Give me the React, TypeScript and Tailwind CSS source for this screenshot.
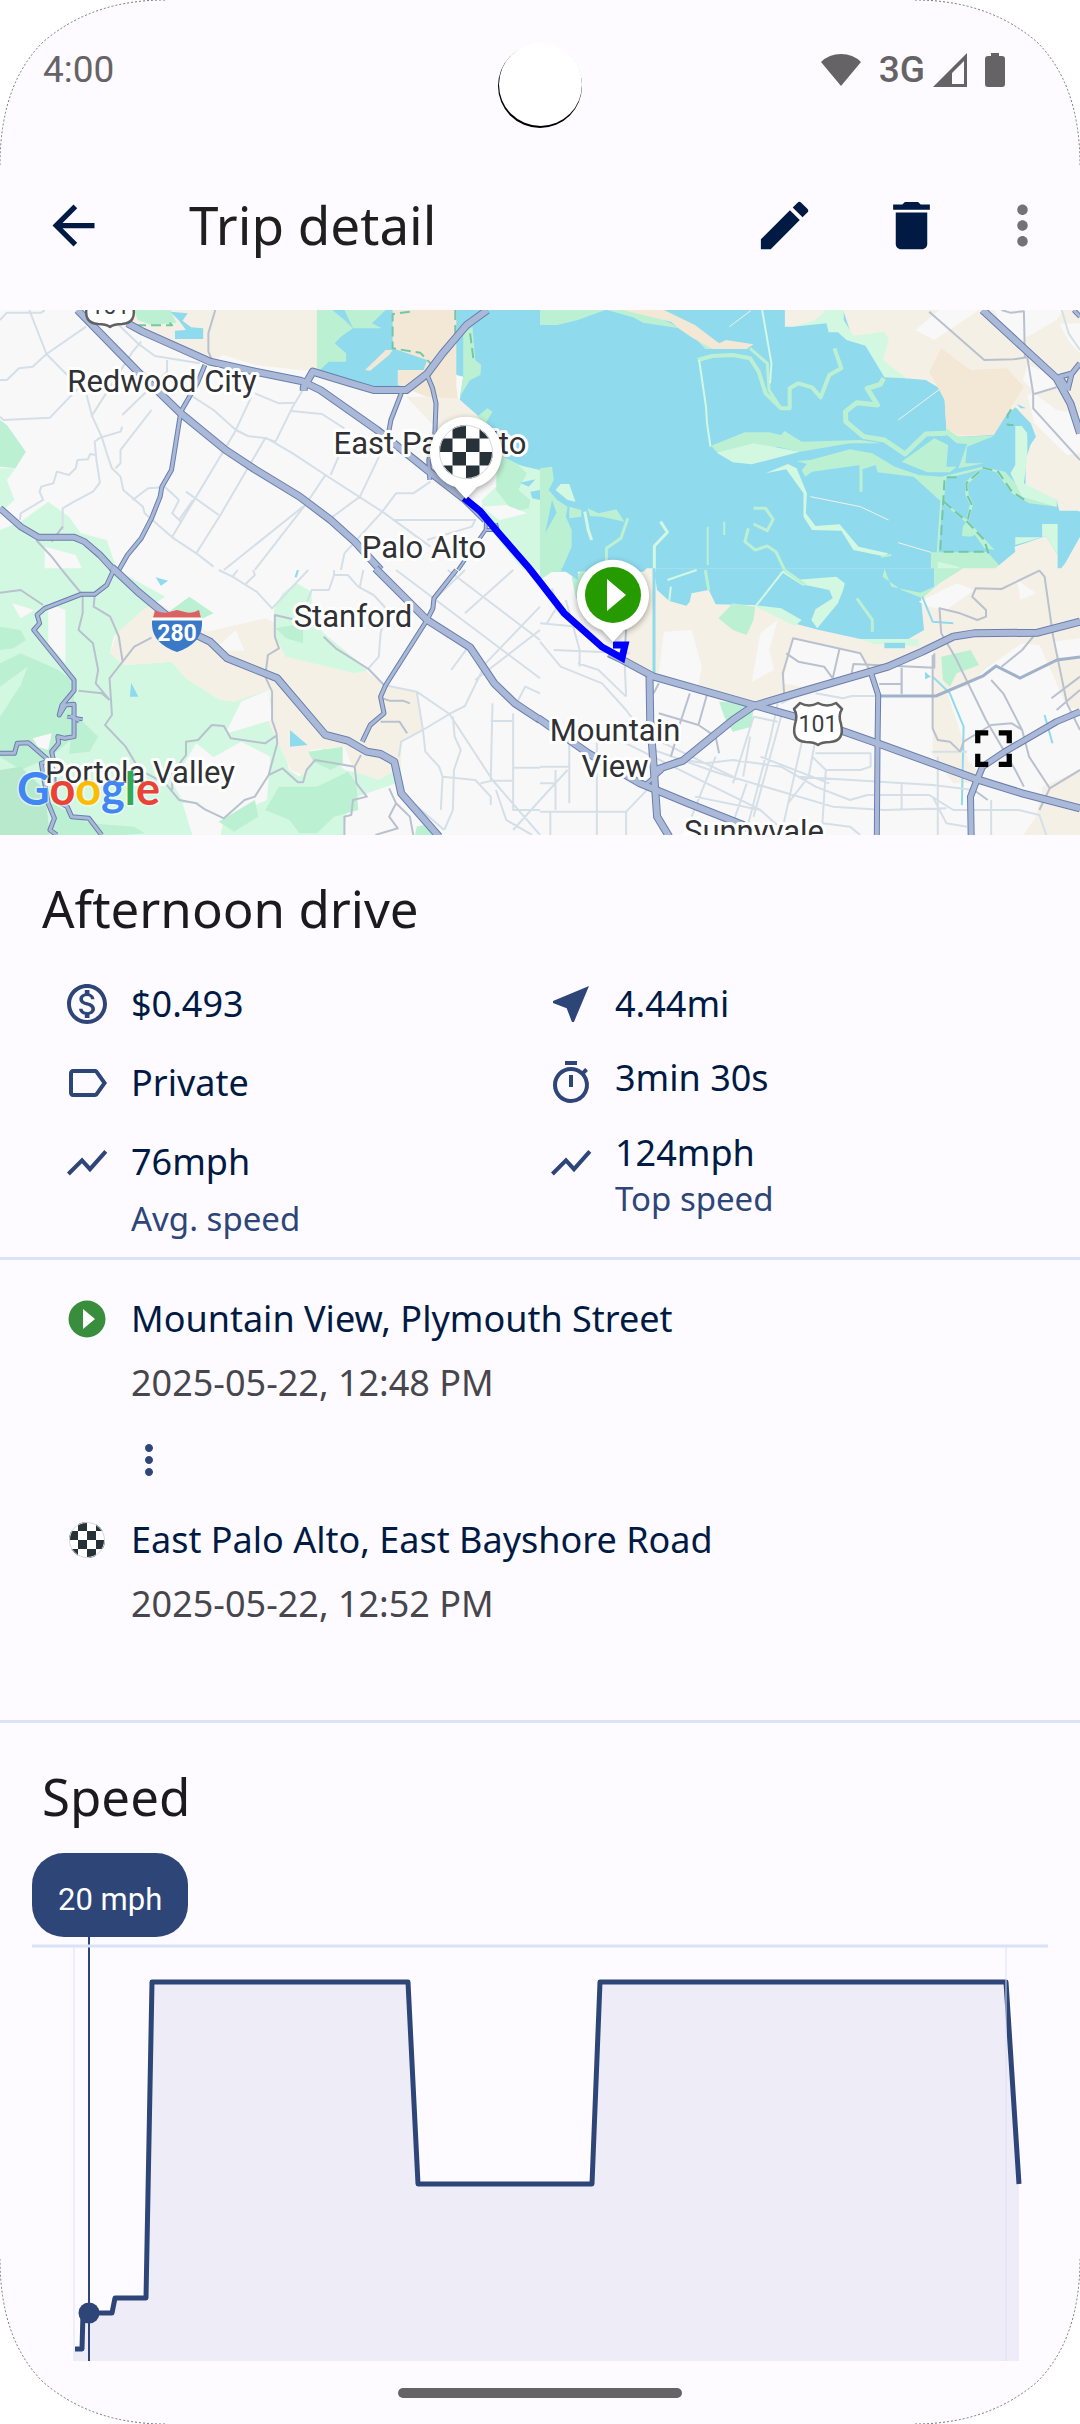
import React from 'react';
import {
  MdArrowBack,
  MdDelete,
  MdEdit,
  MdFullscreen,
  MdLabelOutline,
  MdMoreVert,
  MdNearMe,
  MdOutlineMonetizationOn,
  MdOutlineTimer,
} from 'react-icons/md';

const WATER = '#90daee';
const GREEN = '#bcf0d3';
const MINT = '#d3f8e2';
const SAND = '#f5f0e5';
const DUNE = '#f3e7d6';
const LAND = '#f8f8f8';

interface Tile {
  x: number;
  y: number;
  areas: [string, string][];
  creeks?: [string, number, string][];
  trails?: string;
  streets: string;
  avenues: string;
  highways: [number, string][];
}

const tiles: Tile[] = [
  {
    x: 0,
    y: -10,
    areas: [
      [WATER, 'M920 30H1568V520L1520 500 1450 470 1400 370 1335 300 1345 230 1240 200 1190 270 1080 260 920 215Z'],
      [SAND, 'M375 80L390 30H920V235L880 235 740 210 600 185Z'],
      [LAND, 'M610 185L650 165 740 195 920 215V250L740 230Z'],
      [DUNE, 'M1140 30H1325V260L1330 300 1270 330 1240 290 1155 255V210H1230L1240 180 1140 145Z'],
      [SAND, 'M1240 290L1330 295 1380 340 1440 400 1280 400 1180 290Z'],
      [GREEN, 'M920 30H965L1000 60 1025 85 990 110 972 130 1005 160V185H955L920 218Z'],
      [GREEN, 'M1000 30H1120L1080 70 1108 85H1025Z'],
      [GREEN, 'M390 30H495L512 68 440 75 400 60Z'],
      [WATER, 'M495 35L545 40 530 62 555 82 590 85V117H508V92L540 90 520 62Z'],
      [DUNE, 'M1060 210L1120 150 1140 150 1130 165 1075 212Z'],
      [GREEN, 'M1345 100L1372 80 1380 180 1397 195 1395 225 1365 240 1335 290 1345 230Z'],
      [GREEN, 'M1385 350L1415 325 1430 335 1410 370Z'],
      [MINT, 'M1440 480L1568 510V810H1520L1400 660 1400 600 1440 560Z'],
      [GREEN, 'M1450 465L1500 490 1530 520 1505 570 1540 600 1535 625 1490 635 1440 570Z'],
      [WATER, 'M1510 548L1555 538 1535 560ZM1540 575L1568 570V600L1545 595Z'],
      [LAND, 'M1400 620L1470 615 1530 640 1450 660Z'],
      [GREEN, 'M0 360L20 375 75 455 45 505 0 500Z'],
      [MINT, 'M0 505L45 505 20 540 42 600 0 640Z'],
      [MINT, 'M0 690L60 665 140 605 200 650 235 700 310 720 340 810H0Z'],
      [LAND, 'M130 740L220 765 240 810H130Z'],
    ],
    trails: 'M395 76L500 76 485 60M1190 35L1140 42V145L1220 158 1250 190M1322 30V110M1365 100L1375 180',
    streets:
      'M0 60L20 38 120 38 130 30M85 30L135 162 195 225M250 80L135 162 95 200 55 205 20 240H0M0 350L10 360 145 353 250 240M345 75L400 130 450 168 580 190M410 125L385 155 265 350M485 180V215L355 345M250 280L268 350 295 410 275 425 280 480 290 548 270 575 215 605 182 625V690M295 410L310 460 325 505 350 530 358 570 415 620 420 640 500 712 570 760 620 800M355 380L350 395 295 412M440 330L350 450V490L335 505M278 465L262 462 255 478 225 480 220 505 200 525 165 515 155 550 120 560 115 575 125 600 60 640 58 660M385 600L430 565 480 562 520 600M560 290L620 330 685 390 720 408 775 415 850 460 945 525 1050 595 1110 635 1250 740M740 280L810 310 860 308M845 333L935 342 1000 385M885 260L850 320 800 425 770 415 640 645 570 760M730 290L680 400 500 710M540 575L635 645M520 600L500 640 525 665M560 600L520 660M945 525L890 610 740 810M985 465L960 525M1105 460L1045 590 960 655M1110 635L1000 760 990 810M1110 635L1150 580H1200L1250 545M1140 660H1380L1370 680 1240 720M880 620L650 810',
    avenues: 'M625 30L605 100V155L618 185M105 720L150 770 180 810M150 725L182 680',
    highways: [
      [8, 'M225 30L400 215 525 340 655 450 740 508 870 590 960 660 1030 725 1105 810'],
      [8, 'M370 70L415 95 610 185 740 215 875 243 930 270 1095 390 1240 510 1350 598 1410 660'],
      [8, 'M882 272V262L908 215 1020 250 1085 270H1180L1240 222 1285 160 1355 75 1415 30'],
      [5, 'M595 195L575 245 525 335 498 510 470 560 465 590 440 655 410 715 370 765 345 810'],
      [7, 'M0 625L60 680 112 712H215L245 725 290 765 330 810'],
      [5, 'M1165 280L1135 360 1128 400'],
      [5, 'M1240 225L1256 265 1266 310 1262 420 1245 480 1248 540'],
      [4, 'M1412 650L1410 690 1330 810M1410 690L1445 690 1440 670'],
    ],
  },
  {
    x: 540,
    y: -10,
    areas: [
      [WATER, 'M0 30H1568V815H0Z'],
      [GREEN, 'M0 30H190L110 60 50 75 0 75Z'],
      [GREEN, 'M195 30H300L380 70 430 100 500 147 480 147 455 120 405 85 300 68 270 52Z'],
      [DUNE, 'M240 30H360L450 75 520 130 540 120 620 133 600 147H500L440 112 405 87 380 65Z'],
      [GREEN, 'M497 437L595 397H665L700 405 710 393 760 425 930 420 990 430 900 430 755 455 690 440 515 458Z'],
      [MINT, 'M513 458L620 430 755 455 615 493 560 487Z'],
      [GREEN, 'M745 483L785 480 900 448 965 460 1030 500 1100 525 1165 530 1285 500 1350 515 1400 570 1500 600V620L1420 610 1370 580 1325 517 1285 507 1200 530 1180 535 1172 605 1240 660 1320 750 1290 745 1240 670 1165 605 1085 530 980 517 975 495 930 510V495L790 515 770 530 760 510 775 492Z'],
      [GREEN, 'M1050 485L1145 415 1185 435 1180 500 1210 500 1190 517H1125Z'],
      [SAND, 'M880 30H1568V635L1500 600 1410 560V480L1435 400 1385 325 1325 355 1318 405 1215 410 1180 390 1175 300 1160 265 1120 240 1060 235 995 190 940 130 905 107Z'],
      [DUNE, 'M1165 145L1250 210 1355 205 1405 260 1318 405H1215L1180 385 1175 300 1130 215Z'],
      [MINT, 'M830 30H882V60L910 107 1000 95 1013 120 995 180 1065 235 1000 232 945 137 890 120 865 97 838 97 832 70 735 80Z'],
      [SAND, 'M711 30H830L800 60 735 80H711Z'],
      [LAND, 'M1160 30H1275L1145 120 1090 90Z'],
      [LAND, 'M1320 30H1520L1500 60 1390 125 1340 80Z'],
      [LAND, 'M1415 285L1435 280 1500 330 1568 340V460L1530 465 1435 370Z'],
      [LAND, 'M1415 195L1480 220 1495 260 1440 280 1402 240Z'],
      [LAND, 'M1508 72L1568 70V160L1540 130Z'],
      [GREEN, 'M1180 385L1215 410 1320 407 1240 440 1235 490 1290 490 1215 505 1240 432 1210 430 1175 400Z'],
      [MINT, 'M1380 378H1415V470L1405 550 1500 600V620L1400 590 1366 520 1380 495Z'],
      [WATER, 'M1355 345L1380 322 1425 370 1440 410 1420 440 1415 400 1385 360 1365 375ZM1385 312L1412 325 1395 325Z'],
      [MINT, 'M655 520L720 492 745 505 775 580 772 640 800 678 870 673 925 740 1010 760 1005 770 910 750 875 692 790 690 765 650 765 580 715 508Z'],
      [GREEN, 'M0 505L35 500 40 540 25 570 50 600 80 620 75 650 92 690V740L60 815H0Z'],
      [WATER, 'M35 600L48 638 20 690 15 700Z'],
      [MINT, 'M45 570L60 552H85L103 605 80 600Z'],
      [GREEN, 'M85 620L120 630V650L85 655ZM138 625L170 640 222 628 245 665 180 650 145 648Z'],
      [GREEN, 'M1228 680L1240 660 1275 700 1250 710 1225 708Z'],
      [GREEN, 'M1135 757H1300L1350 815H1135Z'],
      [MINT, 'M1155 785L1215 800 1225 815H1155Z'],
      [SAND, 'M1310 815L1380 755 1378 740 1470 708 1503 765V815Z'],
      [MINT, 'M1458 672H1503V765L1470 708 1380 735V712H1458Z'],
      [SAND, 'M1500 600L1568 632H1508ZM1505 815L1525 790 1568 710V815Z'],
    ],
    creeks: [
      [GREEN, 4, 'M458 180L500 168 560 165 610 175 635 215 655 280 700 325H725V265L750 250 790 262 815 292 840 225 875 205 855 145'],
      [GREEN, 3, 'M610 145L660 190 665 270 695 318'],
      [MINT, 2, 'M462 180L482 320 485 370 495 440M645 30L672 190 668 250'],
      [GREEN, 5, 'M998 235L988 253 950 265 980 315 920 308 887 335 888 365 940 410 1000 420 1060 462 1120 402 1180 400'],
      [GREEN, 3, 'M620 625L655 625 677 658 660 692 620 672M605 685L595 725 625 750 660 738 685 755 710 810'],
      [GREEN, 3, 'M255 655L235 715 193 745V815M932 495V575M1275 515L1238 550 1240 585 1253 612 1242 660'],
      [MINT, 3, 'M350 665L370 697 332 738V815M130 635L140 690 150 720'],
      [GREEN, 2, 'M487 680V795M535 665V705M1155 757L1165 605M1020 765L990 770'],
      [SAND, 1, 'M1040 360L1160 268M550 80L612 32M785 590L930 620 1012 660M1040 728L1135 757M1440 400L1490 465'],
    ],
    trails:
      'M1210 532H1175L1162 755H1300M1172 605L1240 665 1290 720 1305 770M1275 515L1238 550 1240 585 1253 612 1242 660M1285 503L1330 515 1370 575 1415 605M1368 328L1358 345V375H1375',
    streets: 'M1515 30L1535 100 1568 150',
    avenues: 'M1130 35L1290 180 1375 178 1415 172 1432 280V325L1568 480M1340 30L1365 38 1405 34 1408 170M1435 282L1500 262',
    highways: [
      [8, 'M1285 30L1400 140 1500 235 1540 310 1568 400'],
      [6, 'M1568 190L1545 220 1510 230 1535 270M1545 215L1532 270'],
      [5, 'M1550 30L1568 50'],
    ],
  },
  {
    x: 0,
    y: 260,
    areas: [
      [MINT, 'M0 -5H330L480 80 420 120 330 200 320 250 360 285 500 275 540 325 640 390 700 380 780 360 840 600 870 620 940 530 1000 600 1110 625 1165 580 1160 650 1040 720 1000 800H0Z'],
      [SAND, 'M460 100L600 185 740 152 770 145 800 160 830 255 990 300 1060 300 1115 345 1210 365 1225 480 1165 515 1165 590 1100 630 1030 605 1000 530 900 540 910 570 880 615 845 600 780 460 790 355 680 395 640 390 540 325 500 275 360 285 320 250 340 190 420 115Z'],
      [LAND, 'M655 490L700 395 780 360 790 450 665 488Z'],
      [LAND, 'M500 640L570 520 620 562 700 515 785 560 775 690 650 745 590 700 530 690Z'],
      [LAND, 'M530 700H590L650 745 640 800H560Z'],
      [LAND, 'M140 100L190 120V280L140 220ZM35 100L100 120 60 145ZM620 240L685 180 710 242Z'],
      [LAND, 'M1010 690L1150 640 1170 690 1230 795H1000Z'],
      [MINT, 'M820 70L860 38 905 65V100L890 120 940 190 1070 300 1030 310 830 260 800 200 795 120Z'],
      [GREEN, 'M800 175L880 160V220L830 205Z'],
      [GREEN, 'M0 170L60 180 75 210 40 235 0 240ZM0 280L60 250 170 300 215 335V500L150 560 60 600 0 560Z'],
      [MINT, 'M0 350L80 290 60 345 0 440Z'],
      [GREEN, 'M215 430L285 500 260 545 200 552Z'],
      [GREEN, 'M770 720L810 650 920 650 1010 605 1035 640 1040 720 970 740 920 790H870L840 750Z'],
      [GREEN, 'M895 545L995 530V580L960 600 910 575Z'],
      [GREEN, 'M635 755L740 690 750 740 680 785Z'],
      [GREEN, 'M490 125L550 80 620 130 590 145Z'],
      ['#b8e9cc', 'M0 600L60 590 130 660 145 800H0Z'],
      [GREEN, 'M150 700L260 760 390 770 420 790 300 800H150Z'],
      [GREEN, 'M1210 770L1250 760 1275 795H1205Z'],
      [LAND, 'M95 505L150 490 140 540 110 530Z'],
      [WATER, 'M452 22L488 32 467 47ZM377 380L381 338 402 380ZM842 480L893 525 842 530ZM862 0H868L862 22H855Z'],
    ],
    streets:
      'M635 0L675 20 745 65 790 115 895 0M675 20L690 0M710 45L740 15 735 0M970 0V15L955 60H905L892 95M970 15L1010 15 1040 50 1085 75M1055 0L1045 50M1085 75L1125 120 1105 190 1100 260 1070 295M1115 345L1210 365 1305 432 1430 630 1568 795M1210 365L1228 480 1165 515 1158 560M1228 480L1305 432 1350 408 1410 280 1568 110M1150 0L1568 325M1300 0L1568 210M1265 85L1350 0M1350 130L1490 0M1360 230L1310 300M1430 400L1425 630M1490 430V720H1568M1425 453H1490M1490 593H1568M1228 480L1235 545 1275 590 1285 620 1280 720M1285 620L1380 630 1425 680V705M1395 640L1430 632H1490M1440 660L1470 750 1545 795M1315 440L1320 500 1338 540 1318 600 1315 720 1290 780M1490 780L1568 690M1568 180L1380 330M1500 400L1525 350 1568 370M1200 700L1290 780',
    avenues:
      'M0 68L60 60 125 105M180 0L240 75V130L228 180 270 220 285 300 278 340 318 390M275 75L272 110 320 140 345 200 356 275 318 325 322 385 325 435 305 465 365 530 405 600 480 640 520 690 570 700 595 718 650 745 710 690 740 680 780 615 805 520 803 490 790 450V365L770 320 778 255 810 235 798 200V135L860 150M228 362L295 370 318 390M356 275L390 230 440 203M805 495L770 520 670 505 650 468 615 465 575 510 540 515V555L500 610 500 660M780 615L820 595 865 637H880L890 600 915 570 1030 590 1048 555M1030 590L1035 640 1065 680 1025 690 1020 735 1000 740V795M1105 455H1160L1182 490M1110 385L1130 392H1170L1190 400M940 200L975 235 1070 297 1115 345M1130 655L1150 700 1130 740 1155 775 1090 795M1150 700L1190 740 1200 795',
    highways: [
      [5, 'M330 0L310 45 275 73H235L130 115 108 135 115 160 98 180 215 330V362L180 405 172 435 190 405 215 403V500L188 505 168 500 170 520 150 545 155 570 120 580 140 700 158 745 145 780 165 795'],
      [4, 'M195 440L240 448M205 435L230 455'],
      [5, 'M0 550H42L50 520 82 518 135 565 155 600 160 690 195 710 208 740 258 745 295 795'],
      [5, 'M1325 0L1260 85 1257 115 1240 150 1120 345 1105 380 1115 430 1075 465 1052 515'],
      [8, 'M325 -8L400 65 470 125 540 180 610 215 660 265 805 325 945 495 1010 512 1065 545 1105 552 1145 575 1165 670 1275 800'],
      [8, 'M1090 -5L1240 150 1365 232 1435 340 1495 400 1568 450'],
    ],
  },
  {
    x: 540,
    y: 260,
    areas: [
      [SAND, 'M250 130L250 60 310 -5H1568V200L1500 230 1200 200 960 300 620 400 330 315 250 265Z'],
      [SAND, 'M1140 230L1300 180 1440 190 1290 300 1240 350 1180 360 1225 500 1260 640 1225 620 1140 540Z'],
      [SAND, 'M1130 540L1250 580 1300 640 1200 640ZM1460 650L1568 600V800H1400L1440 740ZM1440 200L1568 200V420L1530 410Z'],
      [WATER, 'M330 -5H1145V50L1105 70 1115 180 1070 207 930 207 810 180 720 155 620 105 510 103 490 60 440 70 435 95 425 107 375 93 340 60Z'],
      [GREEN, 'M92 22L130 0V85L105 88Z'],
      [GREEN, 'M0 -5H50L0 30Z'],
      [WATER, 'M60 -5H110V30Z'],
      [LAND, 'M360 185L440 180 470 290 460 345 345 310Z'],
      [LAND, 'M640 190L690 150 665 240 680 300 615 335Z'],
      [LAND, 'M1100 95L1210 40 1260 60 1180 120 1130 110ZM1385 30L1440 70 1395 90Z'],
      [LAND, 'M735 205L930 250 950 300 760 350 705 340ZM1490 215L1568 205V260L1510 262Z'],
      [GREEN, 'M518 145L560 100 625 110 620 150 600 195 560 180Z'],
      [MINT, 'M620 105L700 115 760 150 740 168Z'],
      [GREEN, 'M1165 260L1250 240 1275 285 1210 310 1190 350 1170 330Z'],
      [GREEN, 'M520 395L620 400 615 470 560 485 535 440Z'],
      [MINT, 'M740 30L860 20 885 40 880 60 865 100 805 175 788 150 800 118 850 85 840 60 770 45Z'],
      [GREEN, 'M1000 -5L1020 50 1105 68 1145 50V-5H1230L1160 40 1110 85 1050 60 995 20Z'],
      [MINT, 'M930 207L1100 208V228L970 222Z'],
      [WATER, 'M1000 218H1060V235H1000ZM1118 305L1135 320 1118 328Z'],
    ],
    creeks: [
      [WATER, 3, 'M331 -5V310'],
      [MINT, 2, 'M625 110L705 5 765 45M370 30L455 0M380 50L375 95'],
      [GREEN, 3, 'M480 0L490 60M710 0L770 45M920 85L965 150V185'],
      [WATER, 2, 'M1110 80L1140 155 1200 160M1140 320L1190 370 1230 470 1225 705M1465 435L1488 520'],
    ],
    streets:
      'M0 160L110 170M0 215L60 290 180 340 250 420 300 490M40 240L260 250M35 55L50 110 20 160M75 90L115 240V290M110 280L170 300 250 380M245 260L250 380M85 480V590H0M85 590V700M45 600V720M0 690L80 600M0 725H250L320 650M30 725V795M165 480V795M250 725V795M420 570L480 580 560 570 700 590 800 650 900 690 950 675H1130L1200 720H1390L1450 735 1470 795M250 520L640 720 720 795M330 540L520 610 850 710 1000 720 1180 715M700 440L620 740M770 470L700 795M690 400L670 500 600 780M810 450L780 620 720 700M830 600L820 760M620 440L560 640M620 440L690 455M510 560L440 740M800 550H960V590L930 600H830L790 560M800 370L880 385 905 378H985M760 370L700 400M750 620L1140 645 1260 660M1050 640V720M1155 560V795M1310 690V795M450 680L640 720M600 640L560 760M820 760L900 770 930 795M1140 680L1180 760 1240 770M610 500L590 620M640 560L840 640M1140 545H1240M0 640H45M300 490L560 620M1050 372V300',
    avenues:
      'M710 390L705 310 735 205 930 250 960 305M715 250L750 275 825 290 850 325M870 235L850 325M905 310L910 282 1145 293V250M1165 190L1160 115 1220 130 1270 150 1295 140V120L1255 80 1265 55 1340 57 1450 2 1465 20 1490 200 1530 400 1568 480M1140 255V475L1155 510 1190 515 1220 545M1165 190L1205 260 1295 450 1380 600 1405 650M1310 330L1345 370 1400 480 1420 560 1480 655M1340 290L1400 240 1440 190M1485 385L1568 320M1500 420L1568 360M345 430L460 465 510 500 520 550M435 370L405 465M490 355L460 465M250 180L245 260M1050 293V372M985 342H1050M1220 545L1230 515 1310 465 1370 460 1400 480M1450 720L1480 655 1568 600M130 80L135 150M380 560L400 490M345 340L330 370M1260 660L1300 690',
    highways: [
      [8, 'M-5 445L140 550 290 640 430 700 590 765 630 795'],
      [8, 'M318 320L320 450 330 590 340 740 375 800'],
      [5, 'M355 600L300 650'],
      [6, 'M960 305L982 375 980 520 978 800'],
      [8, 'M200 250L240 270 330 320 620 405 740 440 870 480 980 520 1260 625 1400 670 1568 715'],
      [8, 'M335 600L415 572 560 450 620 408 760 365 960 305 1010 290 1110 245 1200 200 1260 190 1445 188 1568 155'],
      [7, 'M1568 425L1500 455 1350 545 1285 590 1265 640 1250 680 1252 800'],
    ],
  },
];

const places: [string, number, number][] = [
  ['Redwood City', 162, 82],
  ['East Palo Alto', 430, 144],
  ['Palo Alto', 424, 248],
  ['Stanford', 353, 317],
  ['Portola Valley', 140, 473],
  ['Mountain', 615, 431],
  ['View', 615, 467],
  ['Sunnyvale', 754, 532],
];

function tileTransform(tile: Tile) {
  return `translate(${tile.x} ${tile.y}) scale(0.3444 0.3333)`;
}

function RouteShield({ x, y }: { x: number; y: number }) {
  return (
    <g transform={`translate(${x} ${y})`}>
      <path
        d="M-18 -20Q-9 -15 0 -20Q9 -15 18 -20L24 -14Q20 -8 23 1Q27 18 12 19Q4 19 0 22Q-4 19 -12 19Q-27 18 -23 1Q-20 -8 -24 -14Z"
        fill="#fff"
        stroke="#616161"
        strokeWidth="2.5"
        strokeLinejoin="round"
      />
      <text y="9" textAnchor="middle" fontSize="23" fill="#3c4043">101</text>
    </g>
  );
}

function CheckerDisc({ r }: { r: number }) {
  const cell = r / 2;
  const cells = [-2, -1, 0, 1].flatMap((row) =>
    [-2, -1, 0, 1].filter((col) => (row + col) % 2 === 0).map((col) => [col, row])
  );
  return (
    <g>
      <clipPath id={`disc-${r}`}>
        <circle r={r} />
      </clipPath>
      <circle r={r} fill="#fff" />
      <g clipPath={`url(#disc-${r})`}>
        {cells.map(([col, row]) => (
          <rect key={`${col}${row}`} x={(-1 - col) * cell} y={row * cell} width={cell} height={cell} fill="#263238" />
        ))}
      </g>
      <circle r={r - 0.5} fill="none" stroke="#d5d7d8" />
    </g>
  );
}

function Pin({ x, y, children }: { x: number; y: number; children: React.ReactNode }) {
  return (
    <g transform={`translate(${x} ${y})`}>
      <path
        d="M0 47L-11 35A36 36 0 1 1 11 35Z"
        fill="#fff"
        style={{ filter: 'drop-shadow(0 2px 3px rgba(0,0,0,0.35))' }}
      />
      {children}
    </g>
  );
}

function TripMap() {
  return (
    <div className="relative bg-[#f8f8f8]">
      <svg viewBox="0 0 1080 525" className="block h-auto w-full font-[Roboto,sans-serif]" role="img" aria-label="Trip map">
        {tiles.map((tile, i) => (
          <g key={i} transform={tileTransform(tile)}>
            {tile.areas.map(([fill, d]) => (
              <path key={d} d={d} fill={fill} />
            ))}
          </g>
        ))}
        {tiles.map((tile, i) => (
          <g key={i} transform={tileTransform(tile)} fill="none" strokeLinejoin="round">
            {tile.creeks?.map(([color, width, d]) => (
              <path key={d} d={d} stroke={color} strokeWidth={width} vectorEffect="non-scaling-stroke" />
            ))}
            {tile.trails && (
              <path d={tile.trails} stroke="#74c7a6" strokeWidth="2" strokeDasharray="10 5" vectorEffect="non-scaling-stroke" />
            )}
            <path d={tile.streets} stroke="#d5dfe7" strokeWidth="2" vectorEffect="non-scaling-stroke" />
            <path d={tile.avenues} stroke="#b9c1cf" strokeWidth="2" vectorEffect="non-scaling-stroke" />
          </g>
        ))}
        <path
          d="M879 386H936L983 366 996 356 1020 368 1057 350 1080 347"
          fill="none"
          stroke="#a0b1ca"
          strokeWidth="3"
        />
        {tiles.map((tile, i) => (
          <g key={i} transform={tileTransform(tile)} fill="none" strokeLinejoin="round">
            {tile.highways.map(([width, d]) => (
              <path key={d} d={d} stroke="#6a7eae" strokeWidth={width} vectorEffect="non-scaling-stroke" />
            ))}
            {tile.highways.map(([width, d]) => (
              <path key={d} d={d} stroke="#a9b9d7" strokeWidth={width - 2} vectorEffect="non-scaling-stroke" />
            ))}
          </g>
        ))}

        <g fontSize="31" fill="#303134" stroke="#fff" strokeWidth="6" strokeLinejoin="round" textAnchor="middle" paintOrder="stroke">
          {places.map(([name, x, y]) => (
            <text key={name} x={x} y={y}>{name}</text>
          ))}
        </g>

        <RouteShield x={110} y={-5} />
        <RouteShield x={818} y={413} />
        <g transform="translate(177 300)">
          <path d="M-24 8L-22 0Q-15 4 -8 2L0 0 8 2Q15 4 22 0L24 8Z" fill="#db6262" />
          <path d="M-25 8H25V15Q24 34 0 42Q-24 34 -25 15Z" fill="#3a78c8" />
          <path d="M-25 9H25" stroke="#fff" strokeWidth="3" />
          <text y="31" textAnchor="middle" fontSize="23" fontWeight="700" fill="#fff">280</text>
        </g>

        <path
          d="M464 188L480 201 496 220 529 258 540 272 564 303 602 337 622 348 625 335H613"
          fill="none"
          stroke="#0000ff"
          strokeWidth="7"
        />
        <Pin x={466} y={142}>
          <CheckerDisc r={27} />
        </Pin>
        <Pin x={613} y={285}>
          <circle r="28" fill="#259b00" />
          <path d="M-6 -16L13 0 -6 16Z" fill="#fff" />
        </Pin>

        <text
          x="17"
          y="495"
          className="font-[Lato,sans-serif]"
          fontSize="45"
          fontWeight="700"
          stroke="#fff"
          strokeOpacity="0.5"
          strokeWidth="3"
          strokeLinejoin="round"
          paintOrder="stroke"
        >
          <tspan fill="#4285f4">G</tspan>
          <tspan fill="#ea4335">o</tspan>
          <tspan fill="#fbbc04">o</tspan>
          <tspan fill="#4285f4">g</tspan>
          <tspan fill="#34a853">l</tspan>
          <tspan fill="#ea4335">e</tspan>
        </text>
      </svg>
      <button type="button" aria-label="Full screen" className="absolute right-[55px] bottom-[55px] text-black">
        <MdFullscreen size={63} />
      </button>
    </div>
  );
}

function ChartLineIcon() {
  return (
    <svg viewBox="0 0 24 24" className="size-12" fill="none" stroke="currentColor" strokeWidth="2">
      <path d="M2.7 18L9.5 11.2 13.5 15.6 21.4 6.7" />
    </svg>
  );
}

interface StatProps {
  icon: React.ReactNode;
  value: string;
  label?: string;
  valueClass?: string;
  labelClass?: string;
}

function Stat({ icon, value, label, valueClass = 'leading-[48px]', labelClass = '' }: StatProps) {
  return (
    <div className="flex gap-5">
      <div className="shrink-0 text-[#2e4578]">{icon}</div>
      <div>
        <p className={`text-[36px] text-[#001a43] ${valueClass}`}>{value}</p>
        {label && <p className={`text-[33px] leading-[48px] text-[#2e4578] ${labelClass}`}>{label}</p>}
      </div>
    </div>
  );
}

function Stop({ icon, place, time }: { icon: React.ReactNode; place: string; time: string }) {
  return (
    <div className="flex gap-5">
      <svg viewBox="-24 -24 48 48" className="size-12 shrink-0">{icon}</svg>
      <div className="space-y-4 text-[36px] leading-[48px]">
        <p className="text-[#001a43]">{place}</p>
        <p className="text-[#47464d]">{time}</p>
      </div>
    </div>
  );
}

function SpeedChart() {
  const line = '75,412 82,412 83,376 112,376 115,361 146,361 152,45 408,45 418,247 592,247 600,45 1006,45 1019,247';
  return (
    <svg viewBox="0 0 1080 424" className="block h-auto w-full" role="img" aria-label="Speed chart">
      <polygon points={`74,424 ${line} 1019,424`} fill="#eeecf6" />
      <path d="M89 0V424" stroke="#2e4578" strokeWidth="2" />
      <polyline points={line} fill="none" stroke="#2e4578" strokeWidth="5" strokeLinejoin="round" />
      <path d="M74 10V424M1006 10V424" stroke="#dce2f9" strokeOpacity="0.5" strokeWidth="2" />
      <path d="M32 9H1048" stroke="#dae2fa" strokeWidth="3" />
      <circle cx="89" cy="376" r="10.5" fill="#2e4578" />
    </svg>
  );
}

// Display cutout edge, drawn for the top left and mirrored for the others
function Corner({ className }: { className: string }) {
  return (
    <svg viewBox="0 0 165 165" className={`pointer-events-none absolute size-[165px] ${className}`} fill="none">
      <path d="M0 0H165Q92 0 43 42Q0 85 0 165Z" fill="#fff" />
      <path d="M165 0Q92 0 43 42Q0 85 0 165" stroke="#777" strokeDasharray="2 2" />
    </svg>
  );
}

export default function App() {
  return (
    <div className="relative overflow-hidden bg-[#fdfbff] font-['Noto_Sans',sans-serif]">
      <header>
        <div className="relative flex h-[140px] items-center justify-between pr-[73px] pl-[43px] font-[Roboto,sans-serif] text-[37px] text-[#666366]">
          <span>4:00</span>
          <svg viewBox="0 0 86 86" className="absolute top-[43px] left-1/2 size-[86px] -translate-x-1/2">
            <circle cx="43" cy="43" r="42" fill="#000" />
            <circle cx="43.5" cy="41.5" r="41.5" fill="#fff" />
          </svg>
          <div className="flex items-center">
            <svg viewBox="0 0 40 34" className="mr-[18px] h-[34px] w-10" fill="currentColor">
              <path d="M20 33L0 9Q8 1 20 1T40 9Z" />
            </svg>
            <span className="mr-2 font-medium">3G</span>
            <svg viewBox="0 0 34 34" className="mr-4 size-[34px]" fill="currentColor">
              <path fillRule="evenodd" d="M34 0V34H0ZM31 8L19 20V31H31Z" />
            </svg>
            <svg viewBox="0 0 24 34" className="h-[34px] w-6" fill="currentColor">
              <path d="M8 0H16V3H19Q22 3 22 6V31Q22 34 19 34H5Q2 34 2 31V6Q2 3 5 3H8Z" />
            </svg>
          </div>
        </div>

        <div className="flex h-[170px] items-center pr-[26px] pl-[42px] text-[#001a43]">
          <button type="button" aria-label="Back">
            <MdArrowBack size={63} />
          </button>
          <h1 className="ml-[84px] flex-1 text-[53px] leading-[64px] text-[#1f1f1f]">Trip detail</h1>
          <button type="button" aria-label="Edit" className="mr-16">
            <MdEdit size={63} />
          </button>
          <button type="button" aria-label="Delete" className="mr-12">
            <MdDelete size={63} />
          </button>
          <button type="button" aria-label="More options" className="text-[#757277]">
            <MdMoreVert size={63} />
          </button>
        </div>
      </header>

      <TripMap />

      <section className="border-b-3 border-[#dce2f9] pt-[41px] pb-[14px]">
        <h2 className="px-[42px] text-[51px] leading-[64px] text-[#1b1b1f]">Afternoon drive</h2>
        <div className="mt-10 grid grid-cols-2 gap-y-[31px] pr-[49px] pl-[63px]">
          <Stat icon={<MdOutlineMonetizationOn size={48} />} value="$0.493" />
          <Stat icon={<MdNearMe size={48} />} value="4.44mi" />
          <Stat icon={<MdLabelOutline size={48} />} value="Private" />
          <Stat icon={<MdOutlineTimer size={48} />} value="3min 30s" valueClass="leading-[38px]" />
          <Stat icon={<ChartLineIcon />} value="76mph" label="Avg. speed" labelClass="mt-[9px]" />
          <Stat icon={<ChartLineIcon />} value="124mph" label="Top speed" valueClass="leading-[30px]" labelClass="mt-[7px]" />
        </div>
      </section>

      <section className="border-b-3 border-[#dce2f9] pt-[35px] pr-[49px] pb-[92px] pl-[63px]">
        <Stop
          icon={
            <>
              <circle r="18.5" fill="#388e3c" />
              <path d="M-4 -10L8 0 -4 10Z" fill="#fff" />
            </>
          }
          place="Mountain View, Plymouth Street"
          time="2025-05-22, 12:48 PM"
        />
        <MdMoreVert size={48} className="mt-[29px] mb-[32px] ml-[62px] text-[#2e4578]" />
        <Stop icon={<CheckerDisc r={18} />} place="East Palo Alto, East Bayshore Road" time="2025-05-22, 12:52 PM" />
      </section>

      <section className="pt-[41px]">
        <h2 className="px-[42px] text-[51px] leading-[64px] text-[#1b1b1f]">Speed</h2>
        <div className="mt-[25px] ml-8 flex h-[84px] w-fit items-center rounded-[32px] bg-[#2e4578] px-[26px] pt-[10px] font-[Roboto,sans-serif] text-[31px] text-white">
          20 mph
        </div>
        <SpeedChart />
      </section>

      <div className="mx-auto mt-[27px] mb-[26px] h-[10px] w-[284px] rounded-full bg-[#666366]" />

      <Corner className="top-0 left-0" />
      <Corner className="top-0 right-0 -scale-x-100" />
      <Corner className="bottom-0 left-0 -scale-y-100" />
      <Corner className="right-0 bottom-0 -scale-100" />
    </div>
  );
}
